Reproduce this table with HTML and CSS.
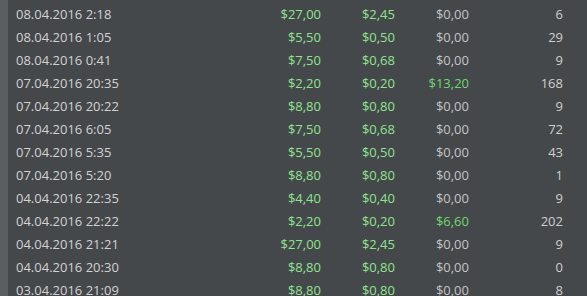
FILE: index.html
```html
<!DOCTYPE html>
<html>
<head>
<meta charset="utf-8">
<link rel="stylesheet" href="styles.css">
</head>
<body>
<div class="page">
  <div class="table">
    <div class="row"><span class="c date">08.04.2016 2:18</span><span class="c num g">$27,00</span><span class="c num g">$2,45</span><span class="c num z">$0,00</span><span class="c num cnt">6</span></div>
    <div class="row"><span class="c date">08.04.2016 1:05</span><span class="c num g">$5,50</span><span class="c num g">$0,50</span><span class="c num z">$0,00</span><span class="c num cnt">29</span></div>
    <div class="row"><span class="c date">08.04.2016 0:41</span><span class="c num g">$7,50</span><span class="c num g">$0,68</span><span class="c num z">$0,00</span><span class="c num cnt">9</span></div>
    <div class="row"><span class="c date">07.04.2016 20:35</span><span class="c num g">$2,20</span><span class="c num g">$0,20</span><span class="c num gs">$13,20</span><span class="c num cnt">168</span></div>
    <div class="row"><span class="c date">07.04.2016 20:22</span><span class="c num g">$8,80</span><span class="c num g">$0,80</span><span class="c num z">$0,00</span><span class="c num cnt">9</span></div>
    <div class="row"><span class="c date">07.04.2016 6:05</span><span class="c num g">$7,50</span><span class="c num g">$0,68</span><span class="c num z">$0,00</span><span class="c num cnt">72</span></div>
    <div class="row"><span class="c date">07.04.2016 5:35</span><span class="c num g">$5,50</span><span class="c num g">$0,50</span><span class="c num z">$0,00</span><span class="c num cnt">43</span></div>
    <div class="row"><span class="c date">07.04.2016 5:20</span><span class="c num g">$8,80</span><span class="c num g">$0,80</span><span class="c num z">$0,00</span><span class="c num cnt">1</span></div>
    <div class="row"><span class="c date">04.04.2016 22:35</span><span class="c num g">$4,40</span><span class="c num g">$0,40</span><span class="c num z">$0,00</span><span class="c num cnt">9</span></div>
    <div class="row"><span class="c date">04.04.2016 22:22</span><span class="c num g">$2,20</span><span class="c num g">$0,20</span><span class="c num gs">$6,60</span><span class="c num cnt">202</span></div>
    <div class="row"><span class="c date">04.04.2016 21:21</span><span class="c num g">$27,00</span><span class="c num g">$2,45</span><span class="c num z">$0,00</span><span class="c num cnt">9</span></div>
    <div class="row"><span class="c date">04.04.2016 20:30</span><span class="c num g">$8,80</span><span class="c num g">$0,80</span><span class="c num z">$0,00</span><span class="c num cnt">0</span></div>
    <div class="row"><span class="c date">03.04.2016 21:09</span><span class="c num g">$8,80</span><span class="c num g">$0,80</span><span class="c num z">$0,00</span><span class="c num cnt">8</span></div>
  </div>
</div>
</body>
</html>
```
FILE: styles.css
```css
html, body {
  margin: 0;
  padding: 0;
  background: #45484b;
  overflow: hidden;
}
.page {
  width: 587px;
  height: 296px;
  box-sizing: border-box;
  border-left: 8px solid #5a5e61;
  background: #45484b;
  font-family: "Open Sans", "DejaVu Sans", sans-serif;
  font-size: 13px;
  overflow: hidden;
}
.table {
  padding-top: 3px;
  padding-left: 8px;
}
.row {
  display: grid;
  grid-template-columns: 200px 105px 74px 74px 94px;
  height: 23px;
  line-height: 23px;
  white-space: nowrap;
}
.date { color: #d2d2d2; }
.num { text-align: right; }
.g { color: #8fe38f; }
.gs { color: #6dd86d; }
.z { color: #c4c4c4; }
.cnt { color: #cfcfcf; }
```
